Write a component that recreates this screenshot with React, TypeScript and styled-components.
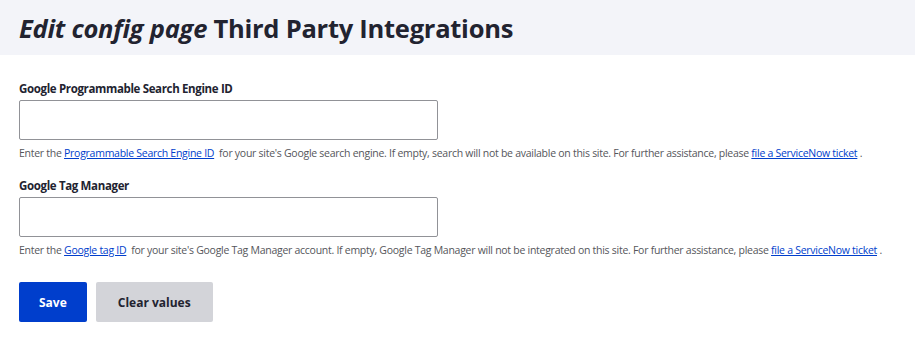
import React from "react";
import styled, { createGlobalStyle } from "styled-components";

const GlobalStyle = createGlobalStyle`
  html, body {
    margin: 0;
    padding: 0;
    background: #ffffff;
  }
  body {
    font-family: "Open Sans", "Noto Sans", "Liberation Sans", sans-serif;
    color: #222330;
  }
`;

const PageHeader = styled.header`
  background: #f3f4f9;
  height: 55px;
  padding: 0 19px;
  display: flex;
  align-items: center;
  box-sizing: border-box;
`;

const Title = styled.h1`
  margin: 0;
  font-size: 25.5px;
  font-weight: 700;
  line-height: 32px;
  color: #222330;
  letter-spacing: -0.25px;

  em {
    font-style: italic;
  }
`;

const Form = styled.form`
  padding: 26px 19px 0;
  display: flex;
  flex-direction: column;
`;

const Field = styled.div`
  display: flex;
  flex-direction: column;
  margin-bottom: 18px;
`;

const Label = styled.label`
  font-size: 11.5px;
  font-weight: 700;
  line-height: 16px;
  margin-bottom: 3px;
  letter-spacing: -0.35px;
  color: #222330;
`;

const TextInput = styled.input`
  width: 419px;
  height: 40px;
  box-sizing: border-box;
  border: 1px solid #919297;
  border-radius: 2px;
  background: #ffffff;
  padding: 0 10px;
  font: inherit;
  outline: none;
`;

const Description = styled.div`
  font-size: 10.5px;
  line-height: 14px;
  margin-top: 6px;
  color: #55565b;
  letter-spacing: -0.27px;
  white-space: nowrap;

  a {
    color: #003ecc;
    text-decoration: underline;
  }
`;

const Actions = styled.div`
  display: flex;
  gap: 9px;
  margin-top: 7px;
`;

const Button = styled.button<{ $primary?: boolean }>`
  height: 40px;
  padding: 0 ${(p) => (p.$primary ? "20px" : "22px")};
  border: none;
  border-radius: 2px;
  font-family: inherit;
  font-size: 12px;
  font-weight: 700;
  cursor: pointer;
  background: ${(p) => (p.$primary ? "#003ecc" : "#d3d4d9")};
  color: ${(p) => (p.$primary ? "#ffffff" : "#222330")};
`;

export default function App() {
  return (
    <>
      <GlobalStyle />
      <PageHeader>
        <Title>
          <em>Edit config page</em> Third Party Integrations
        </Title>
      </PageHeader>
      <Form onSubmit={(e) => e.preventDefault()}>
        <Field>
          <Label htmlFor="pse-id">Google Programmable Search Engine ID</Label>
          <TextInput id="pse-id" type="text" />
          <Description>
            Enter the <a href="#">Programmable Search Engine ID</a>&nbsp; for your site's
            Google search engine. If empty, search will not be available on this site. For
            further assistance, please <a href="#">file a ServiceNow ticket</a> .
          </Description>
        </Field>
        <Field>
          <Label htmlFor="gtm-id">Google Tag Manager</Label>
          <TextInput id="gtm-id" type="text" />
          <Description>
            Enter the <a href="#">Google tag ID</a>&nbsp; for your site's Google Tag Manager
            account. If empty, Google Tag Manager will not be integrated on this site. For
            further assistance, please <a href="#">file a ServiceNow ticket</a> .
          </Description>
        </Field>
        <Actions>
          <Button $primary type="submit">Save</Button>
          <Button type="button">Clear values</Button>
        </Actions>
      </Form>
    </>
  );
}
